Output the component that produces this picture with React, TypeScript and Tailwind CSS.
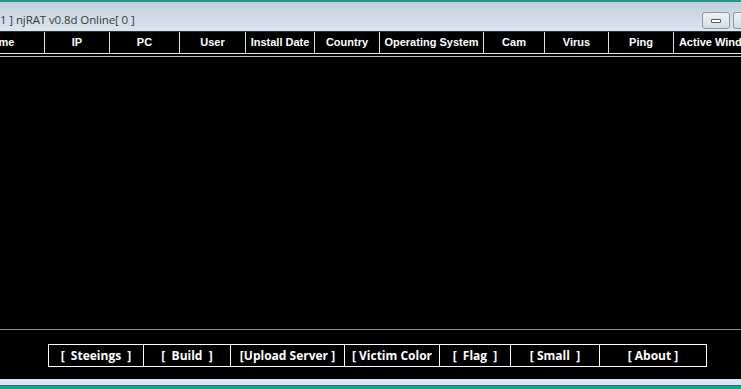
import React from "react";

const cols: { label: string; w: number }[] = [
  { label: "Name", w: 90 },
  { label: "IP", w: 65 },
  { label: "PC", w: 70 },
  { label: "User", w: 66 },
  { label: "Install Date", w: 69 },
  { label: "Country", w: 65 },
  { label: "Operating System", w: 104 },
  { label: "Cam", w: 61 },
  { label: "Virus", w: 64 },
  { label: "Ping", w: 65 },
  { label: "Active Window", w: 88 },
];

const buttons: { label: string; w: number }[] = [
  { label: "[  Steeings  ]", w: 96 },
  { label: "[  Build  ]", w: 87 },
  { label: "[Upload Server ]", w: 114 },
  { label: "[ Victim Color", w: 95 },
  { label: "[  Flag  ]", w: 71 },
  { label: "[ Small  ]", w: 89 },
  { label: "[ About ]", w: 106 },
];

export default function App() {
  return (
    <div className="w-[741px] h-[389px] overflow-hidden flex flex-col bg-black">
      <div className="h-[2px] bg-[#1b9b8b]" />
      <div className="h-[29px] bg-gradient-to-b from-[#c2d0dd] to-[#dbe6f1] flex items-start">
        <span
          className="mt-[10px] text-[11.5px] leading-[16px] text-[#3a3a3a] whitespace-pre tracking-[-0.1px]"
          style={{ fontFamily: '"Open Sans", "Noto Sans", sans-serif' }}
        >
          1 ] njRAT v0.8d Online[ 0 ]
        </span>
        <div className="flex-1" />
        <div className="flex gap-[3px] mt-[10px] w-[39px] shrink-0">
          <div className="w-[28px] h-[17px] shrink-0 rounded-[3px] border border-[#8c9aa8] bg-gradient-to-b from-[#eef2f6] to-[#d2dbe4] flex items-center justify-center">
            <div className="w-[10px] h-[4px] border border-[#555] bg-white rounded-[1px]" />
          </div>
          <div className="w-[8px] h-[17px] shrink-0 rounded-l-[3px] border border-r-0 border-[#8c9aa8] bg-gradient-to-b from-[#eef2f6] to-[#d2dbe4]" />
        </div>
      </div>
      <div className="h-[22px] bg-black flex ml-[-45px] border-t border-[#333]">
        {cols.map((c, i) => (
          <div
            key={c.label}
            className={`shrink-0 flex items-center justify-center overflow-hidden whitespace-nowrap text-white font-bold text-[11px] ${
              i < cols.length - 1 ? "border-r border-[#e0e0e0]" : ""
            }`}
            style={{ width: c.w, fontFamily: '"Liberation Sans", Arial, sans-serif' }}
          >
            <span className="h-[19px] leading-[19px]">{c.label}</span>
          </div>
        ))}
      </div>
      <div className="h-[1px] bg-[#e8e8e8]" />
      <div className="h-[2px] bg-black" />
      <div className="h-[1px] bg-[#bbbbbb]" />
      <div className="flex-1 bg-black" />
      <div className="h-[1px] bg-[#8a8a8a]" />
      <div className="h-[49px] bg-black flex items-start pt-[14px] pl-[48px]">
        <div className="flex h-[23px] border border-white">
          {buttons.map((b, i) => (
            <div
              key={b.label}
              className={`shrink-0 flex items-center justify-center whitespace-pre text-white font-bold text-[12px] ${
                i < buttons.length - 1 ? "border-r border-white" : ""
              }`}
              style={{
                width: i === 0 ? b.w - 1 : b.w,
                fontFamily: '"Open Sans", "Noto Sans", sans-serif',
              }}
            >
              {b.label}
            </div>
          ))}
        </div>
      </div>
      <div className="h-[6px] bg-[#d8e5f2]" />
      <div className="h-[1px] bg-[#555d66]" />
      <div className="h-[3px] bg-[#16a08e]" />
    </div>
  );
}
